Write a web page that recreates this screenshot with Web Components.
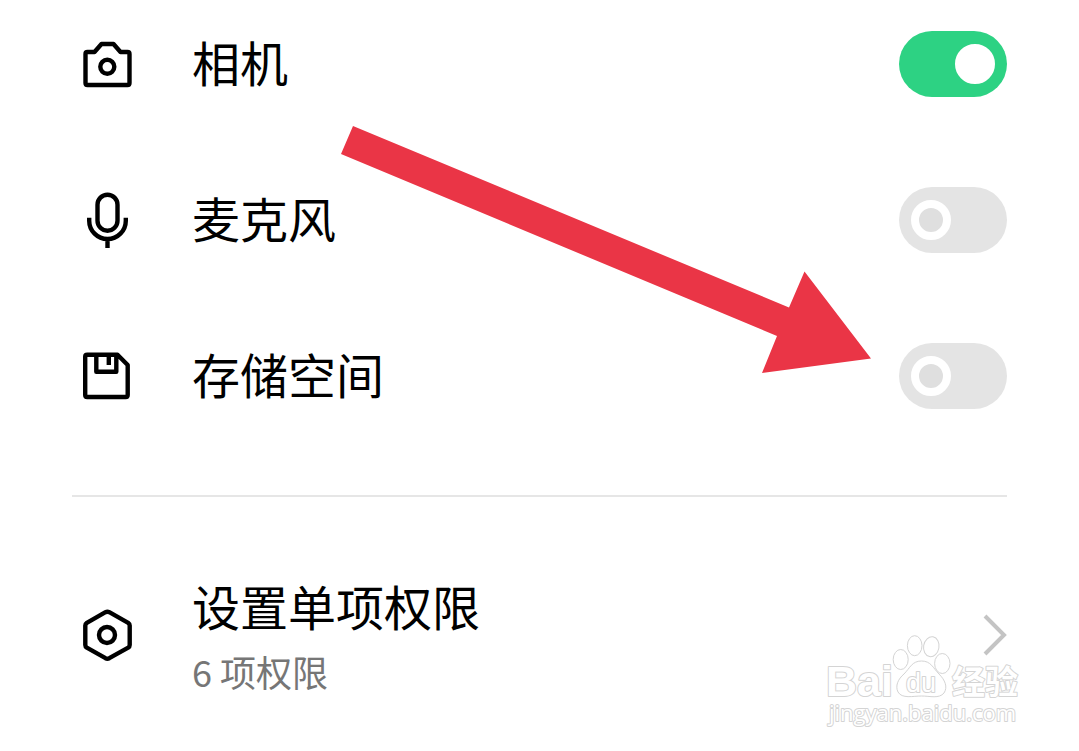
<!DOCTYPE html>
<html lang="zh-CN">
<head>
<meta charset="utf-8">
<meta name="viewport" content="width=device-width, initial-scale=1">
<title>应用权限</title>
<style>
body { margin: 0; background: #fff; color: #000; font-family: "Noto Sans CJK SC", sans-serif; }
</style>
</head>
<body>
<permission-page></permission-page>
<script>
const ICONS = {
  camera: '<path d="M13.5 23q0-2 2-2H22.5L29.5 13H41.5L48.5 21H55.5q2 0 2 2V52q0 2-2 2H15.5q-2 0-2-2Z"/><circle cx="35.3" cy="35.8" r="7"/>',
  mic: '<rect x="25.5" y="7.7" width="20" height="36" rx="10"/><path d="M17.2 30.7V33.7a18.3 18.3 0 0 0 36.6 0V30.7M35.5 52V61"/>',
  storage: '<path d="M13.2 13.7q0-2 2-2H45.5L55.7 22V52q0 2-2 2H15.2q-2 0-2-2ZM24.3 12V28.7H44.3V12M36.8 12V22"/>',
  settings: '<path d="M33.5 10.2q1.9-1 3.8 0L56.2 20.8q1.5 1 1.5 2.7V43q0 1.7-1.5 2.7L37.3 56.2q-1.9 1-3.8 0L14.8 45.7q-1.5-1-1.5-2.7V23.5q0-1.7 1.5-2.7Z"/><circle cx="35" cy="33" r="8"/>'
};

class AppIcon extends HTMLElement {
  connectedCallback() {
    this.attachShadow({ mode: 'open' }).innerHTML = `
      <style>
        :host { display: block; flex: none; width: 70px; height: 66px; }
        svg { display: block; fill: none; stroke: #000; stroke-width: 4.4; stroke-linejoin: round; }
      </style>
      <svg width="70" height="66" viewBox="0 0 70 66" aria-hidden="true">${ICONS[this.getAttribute('name')]}</svg>`;
  }
}
customElements.define('app-icon', AppIcon);

class PermissionToggle extends HTMLElement {
  connectedCallback() {
    this.attachShadow({ mode: 'open' }).innerHTML = `
      <style>
        :host { display: block; }
        .row { display: flex; align-items: center; gap: 50px; height: 66px; }
        label { flex: 1; padding-bottom: 6px; font-size: 48px; line-height: 60px; }
        input { appearance: none; flex: none; display: flex; align-items: center; box-sizing: border-box;
          width: 108px; height: 66px; margin: 0; padding: 0 12px; border-radius: 33px; background: #e4e4e4; }
        input::before { content: ""; box-sizing: border-box; width: 40px; height: 40px; border-radius: 50%;
          border: 8px solid #fff; background: #dfdfdf; }
        input:checked { background: #2dd283; justify-content: flex-end; }
        input:checked::before { background: #fff; }
      </style>
      <div class="row">
        <app-icon name="${this.getAttribute('icon')}"></app-icon>
        <label for="switch"><slot></slot></label>
        <input type="checkbox" role="switch" id="switch" ${this.hasAttribute('checked') ? 'checked' : ''}>
      </div>`;
  }
}
customElements.define('permission-toggle', PermissionToggle);

class PermissionLink extends HTMLElement {
  connectedCallback() {
    this.attachShadow({ mode: 'open' }).innerHTML = `
      <style>
        :host { display: block; }
        a { display: flex; align-items: center; gap: 50px; color: inherit; text-decoration: none; }
        .text { flex: 1; }
        .title { font-size: 48px; line-height: 72px; }
        .note { font-size: 36px; line-height: 60px; color: #767676; }
        svg { flex: none; }
      </style>
      <a href="#permissions">
        <app-icon name="settings"></app-icon>
        <div class="text"><div class="title"><slot></slot></div><div class="note"><slot name="note"></slot></div></div>
        <svg width="24" height="44" viewBox="0 0 24 44" fill="none" stroke="#c4c4c4" stroke-width="4" aria-hidden="true"><path d="M2 3L21 22L2 41"/></svg>
      </a>`;
  }
}
customElements.define('permission-link', PermissionLink);

class PointerArrow extends HTMLElement {
  connectedCallback() {
    this.attachShadow({ mode: 'open' }).innerHTML = `
      <style>
        :host { display: block; position: absolute; top: 126px; right: 208px; pointer-events: none; }
        svg { display: block; }
      </style>
      <svg width="530" height="248" viewBox="0 0 530 248" aria-hidden="true">
        <path fill="#ea3546" d="M12 0L448 181.500L463.500 145.500L530 232.500L421 247L436 210L0 28Z"/>
      </svg>`;
  }
}
customElements.define('pointer-arrow', PointerArrow);

class SiteMark extends HTMLElement {
  connectedCallback() {
    this.attachShadow({ mode: 'open' }).innerHTML = `
      <style>
        :host { display: block; position: absolute; top: 630px; right: 53px; pointer-events: none; }
        svg { display: block; fill: #fff; stroke: #d4d4d4; stroke-width: 1; }
        text { font-family: "Liberation Sans", sans-serif; paint-order: stroke; stroke-width: 2; stroke-linejoin: round; }
        .bai { font-size: 43px; font-weight: 700; }
        .du { font-size: 27px; }
        .cn { font-family: "Noto Sans CJK SC", sans-serif; font-size: 33px; font-weight: 700; }
        .url { font-family: "Open Sans", sans-serif; font-size: 22px; }
      </style>
      <svg width="204" height="104" viewBox="0 0 204 104">
        <text class="bai" x="4" y="66">Bai</text>
        <ellipse cx="78.700" cy="29.500" rx="7.500" ry="10"/>
        <ellipse cx="92.700" cy="15.700" rx="7.300" ry="10"/>
        <ellipse cx="109.300" cy="16.700" rx="7.700" ry="10" transform="rotate(10 109.300 16.700)"/>
        <ellipse cx="120.300" cy="33.500" rx="7.700" ry="10"/>
        <path d="M99.500 31C90 31 88 38 82 44C76 49 73 56 76 62C80 69 91 66 99.500 66C108 66 117 69 122 63C126 57 123 50 117 44C111 38 109 31 99.500 31Z"/>
        <text class="du" x="84" y="62">du</text>
        <text class="cn" x="130" y="64">经验</text>
        <text class="url" x="7" y="91">jingyan.baidu.com</text>
      </svg>`;
  }
}
customElements.define('site-mark', SiteMark);

class PermissionPage extends HTMLElement {
  connectedCallback() {
    this.attachShadow({ mode: 'open' }).innerHTML = `
      <style>
        :host { display: block; position: relative; }
        main { padding: 31px 72px 50px; }
        section { display: flex; flex-direction: column; gap: 90px; }
        hr { height: 2px; margin: 86px 0 72px; border: 0; background: #e6e6e6; }
      </style>
      <main>
        <section>
          <permission-toggle icon="camera" checked>相机</permission-toggle>
          <permission-toggle icon="mic">麦克风</permission-toggle>
          <permission-toggle icon="storage">存储空间</permission-toggle>
        </section>
        <hr>
        <permission-link>设置单项权限<span slot="note">6 项权限</span></permission-link>
      </main>
      <pointer-arrow></pointer-arrow>
      <site-mark></site-mark>`;
  }
}
customElements.define('permission-page', PermissionPage);
</script>
</body>
</html>
